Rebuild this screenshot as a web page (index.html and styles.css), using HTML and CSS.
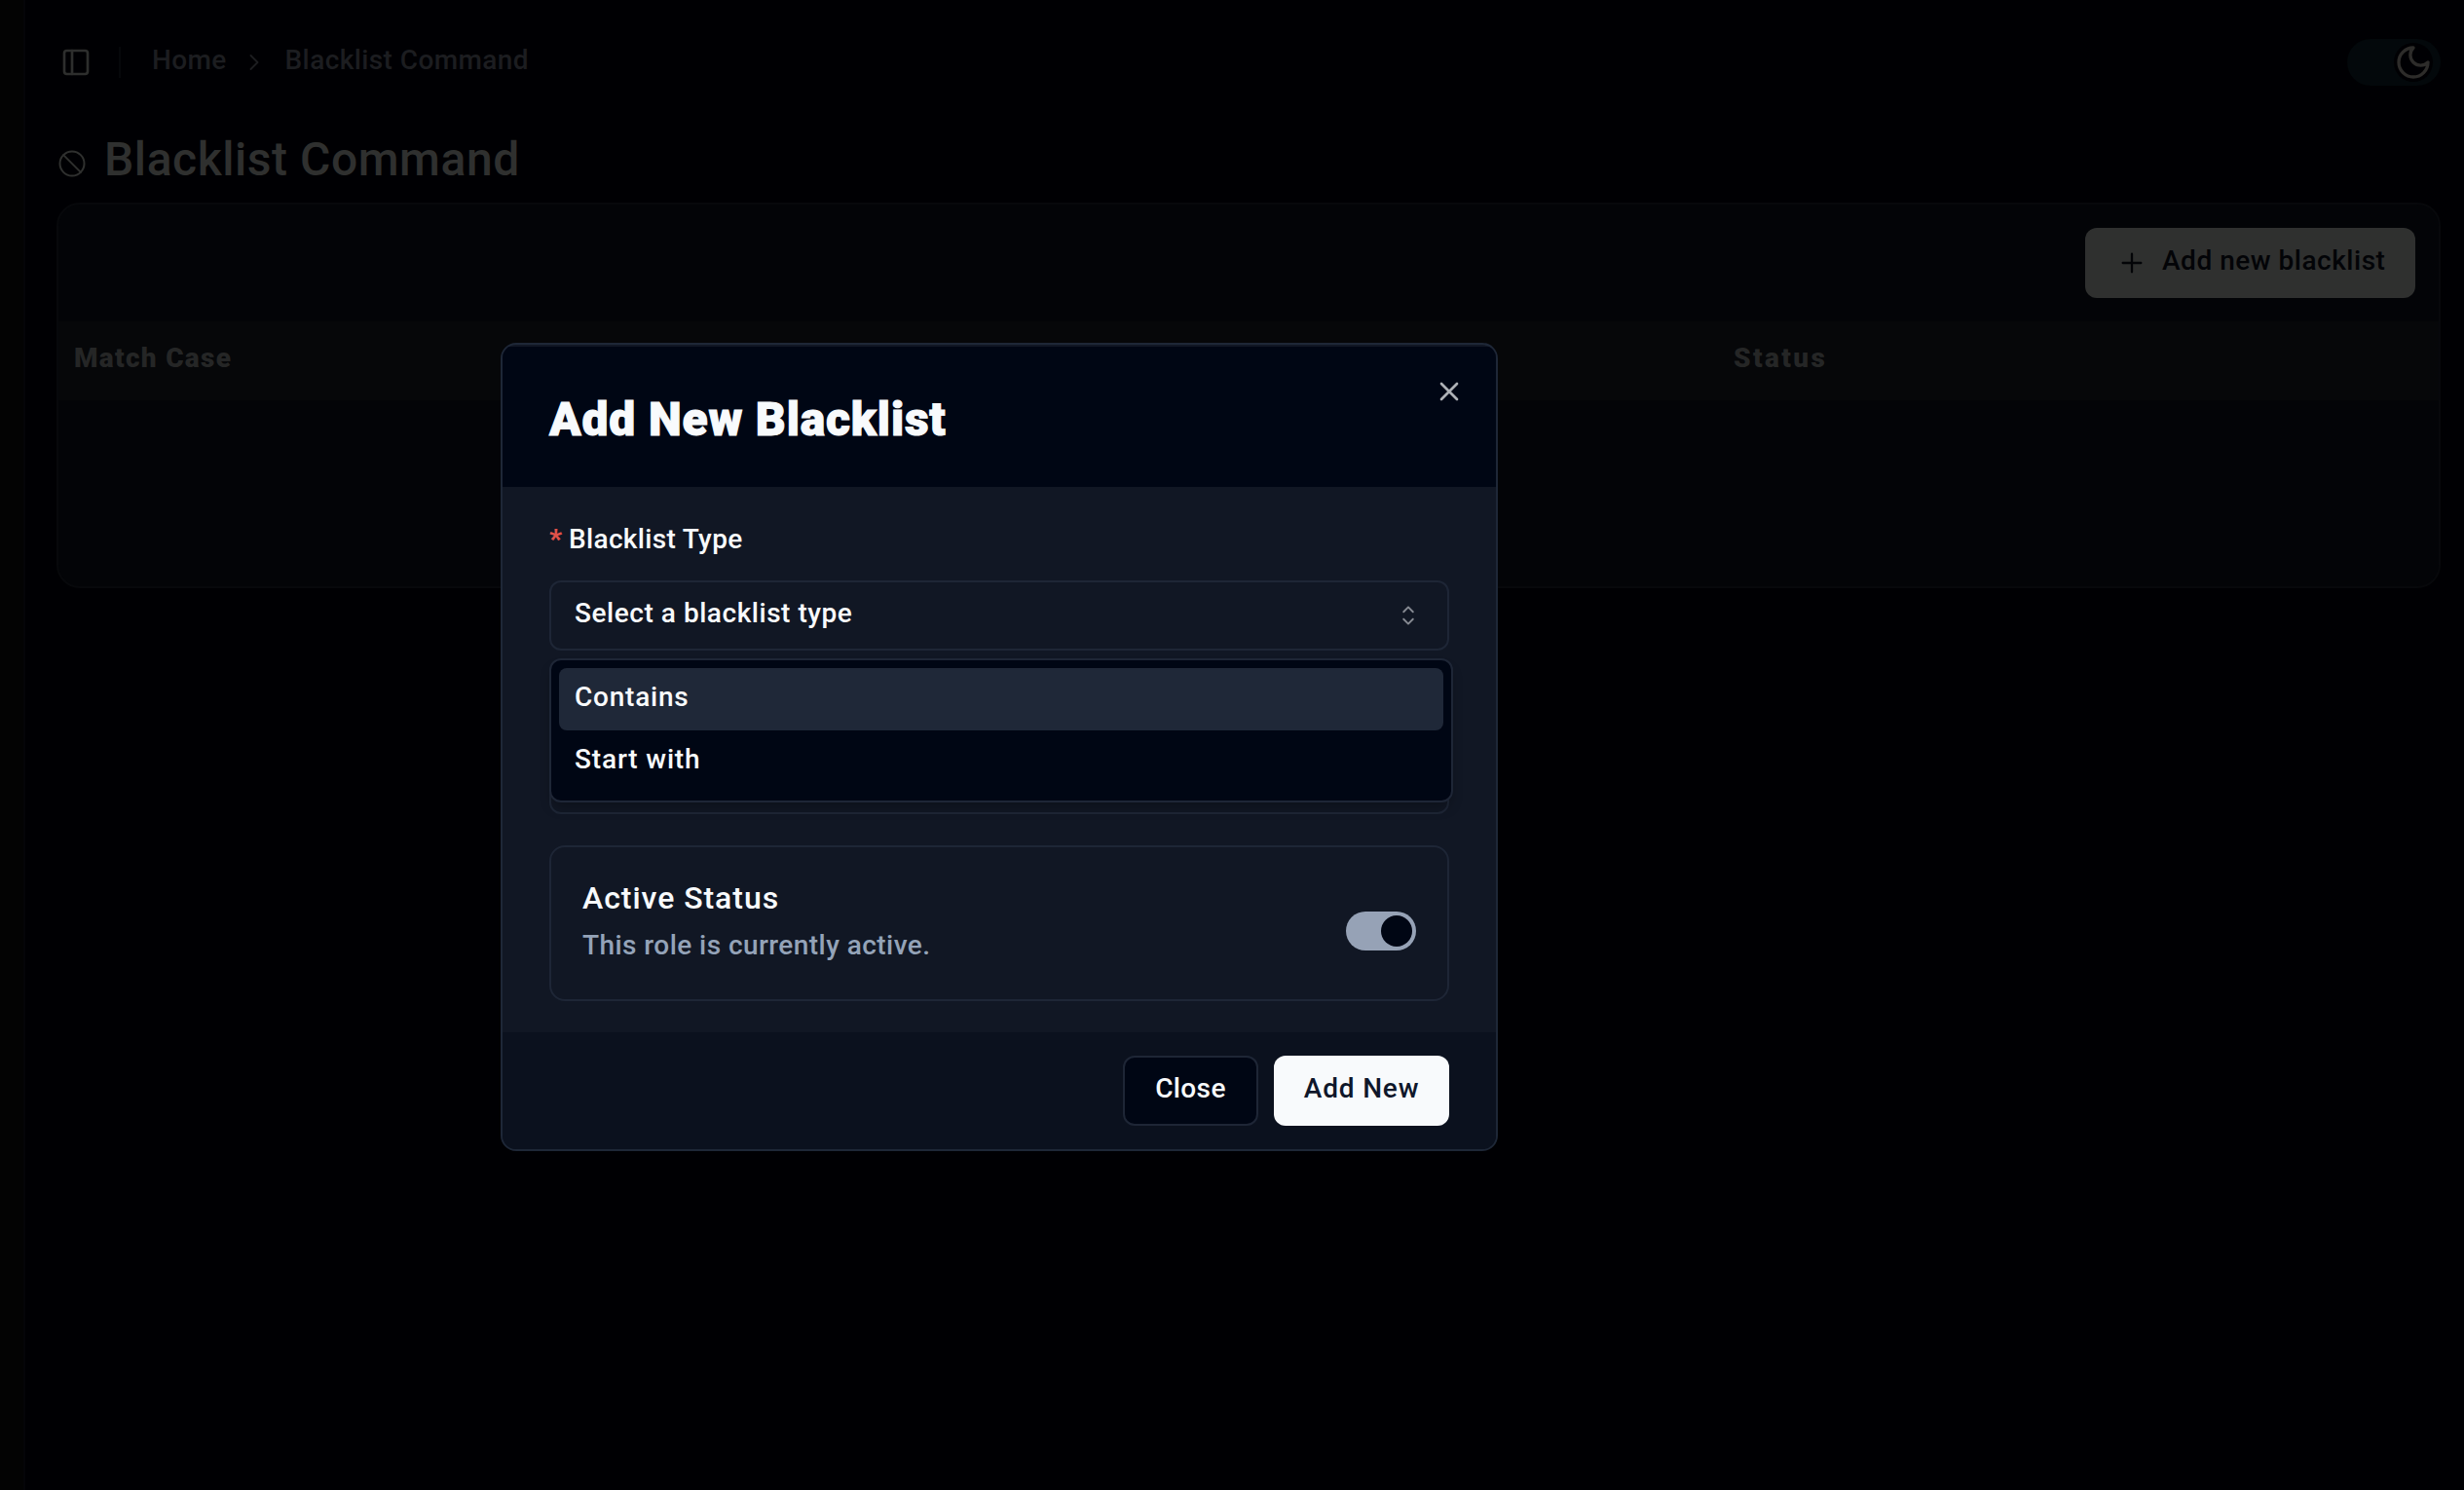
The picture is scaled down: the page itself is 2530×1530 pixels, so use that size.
FILE: index.html
```html
<!DOCTYPE html>
<html lang="en">
<head>
<meta charset="utf-8">
<title>Blacklist Command</title>
<link rel="stylesheet" href="styles.css">
</head>
<body>
<div class="app">
  <aside class="sidebar"></aside>
  <main class="main">
    <header class="topbar">
      <svg class="icon-panel" viewBox="0 0 24 24"><rect x="3" y="3" width="18" height="18" rx="2"/><path d="M9 3v18"/></svg>
      <span class="divider"></span>
      <nav class="crumbs">
        <span class="t t-home">Home</span>
        <svg class="icon-chevron" viewBox="0 0 24 24"><path d="m9 18 6-6-6-6"/></svg>
        <span class="t t-crumb">Blacklist Command</span>
      </nav>
      <div class="theme-switch"><span class="theme-thumb"><svg class="icon-moon" viewBox="0 0 24 24"><path d="M12 3a6 6 0 0 0 9 9 9 9 0 1 1-9-9Z"/></svg></span></div>
    </header>
    <div class="page-title">
      <svg class="icon-ban" viewBox="0 0 24 24"><circle cx="12" cy="12" r="10"/><path d="m4.9 4.9 14.2 14.2"/></svg>
      <h1 class="t t-h1">Blacklist Command</h1>
    </div>
    <section class="card">
      <div class="card-bar">
        <button class="btn-add"><svg class="icon-plus" viewBox="0 0 24 24"><path d="M5 12h14M12 5v14"/></svg><span class="t t-add">Add new blacklist</span></button>
      </div>
      <div class="table-head">
        <span class="t t-match">Match Case</span>
        <span class="t t-status">Status</span>
      </div>
    </section>
  </main>
</div>

<div class="overlay">
  <div class="modal">
    <div class="modal-head">
      <h2 class="t t-title">Add New Blacklist</h2>
      <svg class="icon-x" viewBox="0 0 24 24"><path d="M18 6 6 18M6 6l12 12"/></svg>
    </div>
    <div class="modal-body">
      <div class="label"><span class="star">*</span><span class="t t-label">Blacklist Type</span></div>
      <div class="select">
        <span class="t t-select">Select a blacklist type</span>
        <svg class="icon-sort" viewBox="0 0 15 15"><path d="M4.93179 5.43179C4.75605 5.60753 4.75605 5.89245 4.93179 6.06819C5.10753 6.24392 5.39245 6.24392 5.56819 6.06819L7.49999 4.13638L9.43179 6.06819C9.60753 6.24392 9.89245 6.24392 10.0682 6.06819C10.2439 5.89245 10.2439 5.60753 10.0682 5.43179L7.81819 3.18179C7.73379 3.0974 7.61933 3.04999 7.49999 3.04999C7.38064 3.04999 7.26618 3.0974 7.18179 3.18179L4.93179 5.43179ZM10.0682 9.56819C10.2439 9.39245 10.2439 9.10753 10.0682 8.93179C9.89245 8.75606 9.60753 8.75606 9.43179 8.93179L7.49999 10.8636L5.56819 8.93179C5.39245 8.75606 5.10753 8.75606 4.93179 8.93179C4.75605 9.10753 4.75605 9.39245 4.93179 9.56819L7.18179 11.8182C7.35753 11.9939 7.64245 11.9939 7.81819 11.8182L10.0682 9.56819Z"/></svg>
        <div class="menu">
          <div class="option active"><span class="t t-contains">Contains</span></div>
          <div class="option"><span class="t t-start">Start with</span></div>
        </div>
      </div>
      <div class="input"></div>
      <div class="status">
        <div class="status-text">
          <span class="t t-active">Active Status</span>
          <span class="t t-role">This role is currently active.</span>
        </div>
        <span class="switch"><span class="thumb"></span></span>
      </div>
    </div>
    <div class="modal-foot">
      <button class="btn btn-close"><span class="t t-close">Close</span></button>
      <button class="btn btn-primary"><span class="t t-new">Add New</span></button>
    </div>
  </div>
</div>
</body>
</html>
```
FILE: styles.css
```css
* { box-sizing: border-box; }
body { margin: 0; background: #000003; font-family: Roboto, sans-serif; font-size: 28px; font-weight: 500; line-height: 40px; overflow: hidden; }
h1, h2 { margin: 0; }
button { font: inherit; border: 0; padding: 0; }
svg { display: block; flex: none; fill: none; stroke: currentColor; stroke-width: 2; stroke-linecap: round; stroke-linejoin: round; }

/* Text runs: tracking per label */
.t { white-space: nowrap; padding-bottom: 5px; width: fit-content; }
.t-home { letter-spacing: .34px; }
.t-crumb { letter-spacing: .41px; }
.t-add { letter-spacing: .52px; }
.t-match { letter-spacing: 1.3px; }
.t-status { letter-spacing: 2.4px; }
.t-label { letter-spacing: .33px; }
.t-select { letter-spacing: .54px; }
.t-contains { letter-spacing: .77px; }
.t-start { letter-spacing: .84px; }
.t-close { letter-spacing: .36px; }
.t-new { letter-spacing: .82px; }

.app { display: flex; height: 1530px; }
.sidebar { width: 26px; background: #030303; border-right: 2px solid #050508; }
.main { flex: 1; padding: 0 24px 0 32px; }

.topbar { display: flex; align-items: center; height: 128px; padding-left: 4px; }
.icon-panel { width: 32px; height: 32px; color: #2d2e2d; }
.divider { width: 2px; height: 32px; margin: 0 32px 0 28px; background: #06070a; }
.crumbs { display: flex; align-items: center; color: #1c1d20; }
.icon-chevron { width: 28px; height: 28px; margin: 0 18px 0 14px; stroke-width: 1.6; }
.theme-switch { display: flex; align-items: center; justify-content: flex-end; width: 96px; height: 48px; margin-left: auto; padding-right: 8px; border-radius: 24px; background: #03080b; }
.theme-thumb { width: 40px; height: 40px; border-radius: 50%; background: #000003; }
.icon-moon { width: 40px; height: 40px; color: #2d2c2a; }

.page-title { display: flex; align-items: center; gap: 18px; height: 80px; color: #2f302f; }
.icon-ban { width: 30px; height: 30px; stroke-width: 1.6; margin-left: 1px; }
.page-title h1 { font-size: 48px; line-height: 56px; font-weight: 500; letter-spacing: .55px; padding-bottom: 8px; }

.card { height: 396px; border: 2px solid #07080b; border-radius: 24px; background: #030407; overflow: hidden; }
.card-bar { display: flex; justify-content: flex-end; height: 120px; padding: 24px; }
.btn-add { display: flex; align-items: center; width: 339px; height: 72px; padding-left: 32px; gap: 15px; border-radius: 12px; background: #2f302f; color: #030407; }
.icon-plus { width: 32px; height: 32px; stroke-width: 1.7; }
.table-head { display: grid; grid-template-columns: 1704px 1fr; align-items: center; height: 81px; padding-left: 16px; background: #060709; color: #252626; font-weight: 900; }

.overlay { position: absolute; inset: 0; }
.modal { position: absolute; left: 514px; top: 352px; width: 1024px; height: 830px; padding-top: 2px; border: 2px solid #1e2737; border-radius: 16px; background: #111724; color: #f8fafc; overflow: hidden; }
.modal-head { display: flex; justify-content: space-between; height: 144px; padding: 30px 32px 0 48px; background: #000614; }
.modal-head h2 { font-size: 48px; line-height: 56px; font-weight: 900; letter-spacing: .82px; padding: 17px 0 0; -webkit-text-stroke: 1px currentColor; }
.icon-x { width: 32px; height: 32px; color: #aeb1b6; }
.modal-body { height: 560px; padding: 34px 48px 0; }
.label { display: flex; height: 62px; }
.star { width: 20px; color: #e0524a; font-weight: 900; }
.select { position: relative; display: flex; align-items: center; justify-content: space-between; height: 72px; padding: 0 24px; border: 2px solid #1e2636; border-radius: 12px; }
.icon-sort { width: 32px; height: 32px; fill: #868a92; stroke: none; }
.menu { position: absolute; z-index: 1; left: -2px; top: 78px; width: 928px; height: 148px; padding: 8px; border: 2px solid #1e2636; border-radius: 12px; background: #000614; box-shadow: 0 8px 12px -2px rgba(0,0,0,.25); }
.option { display: flex; align-items: center; height: 64px; padding-left: 16px; border-radius: 8px; }
.active { background: #1f2838; }
.input { height: 72px; margin-top: 96px; border: 2px solid #1e2636; border-radius: 12px; }
.status { display: flex; align-items: center; justify-content: space-between; height: 160px; margin-top: 32px; padding: 0 32px; border: 2px solid #1e2636; border-radius: 16px; }
.status-text { display: flex; flex-direction: column; gap: 2px; }
.t-active { font-size: 32px; line-height: 44px; letter-spacing: .95px; }
.t-role { color: #94a3b8; letter-spacing: .44px; }
.switch { display: flex; align-items: center; justify-content: flex-end; width: 72px; height: 40px; margin-top: 16px; padding-right: 4px; border-radius: 20px; background: #96a2b6; }
.thumb { width: 32px; height: 32px; border-radius: 50%; background: #000614; }
.modal-foot { display: flex; justify-content: flex-end; gap: 16px; height: 120px; padding: 24px 48px; background: #0b111e; }
.btn { display: flex; align-items: center; justify-content: center; height: 72px; border-radius: 12px; }
.btn-close { width: 139px; border: 2px solid #1e2636; background: #000614; color: #f8fafc; }
.btn-primary { width: 180px; background: #f8fafc; color: #0f172a; }
```
